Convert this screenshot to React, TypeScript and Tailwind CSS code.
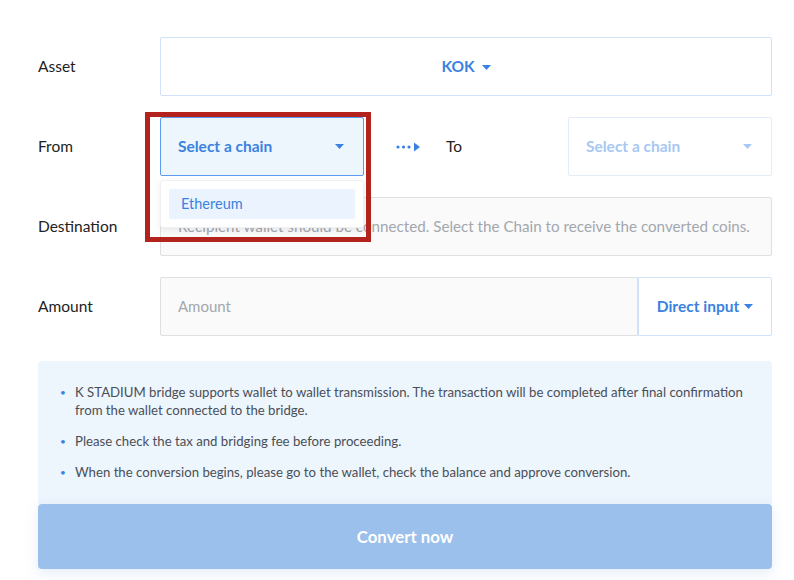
import React from "react";

const font = { fontFamily: "Lato, 'Noto Sans', sans-serif" };

function Caret({ className = "" }: { className?: string }) {
  return (
    <svg width="9" height="5" viewBox="0 0 9 5" className={className}>
      <path d="M0 0 H9 L4.5 5 Z" fill="currentColor" />
    </svg>
  );
}

function DotsArrow() {
  return (
    <svg width="25" height="10" viewBox="0 0 25 10" className="text-[#3b82e0]">
      <circle cx="2" cy="5" r="1.6" fill="currentColor" />
      <circle cx="7.5" cy="5" r="1.6" fill="currentColor" />
      <circle cx="13" cy="5" r="1.6" fill="currentColor" />
      <path d="M18 0.5 L24 5 L18 9.5 Z" fill="currentColor" />
    </svg>
  );
}

export default function App() {
  return (
    <div className="w-[794px] h-[580px] bg-white overflow-hidden relative text-[#222]" style={font}>
      <div className="ml-[38px] w-[734px] pt-[37px]">
        {/* Asset */}
        <div className="flex items-center h-[59px]">
          <div className="w-[122px] text-[15.5px]">Asset</div>
          <div className="flex-1 h-full border border-[#cfe2f9] rounded-[2px] flex items-center justify-center gap-[7px] text-[#3b82e0] font-bold text-[15.5px]">
            KOK <Caret className="mt-[2px]" />
          </div>
        </div>

        {/* From / To */}
        <div className="flex items-center h-[59px] mt-[21px]">
          <div className="w-[122px] text-[15.5px]">From</div>
          <div className="relative w-[204px] h-full">
            <div className="h-full bg-[#edf5fd] border border-[#5c9cef] rounded-[2px] flex items-center justify-between pl-[17px] pr-[19px] text-[#3b82e0] font-bold text-[15.5px]">
              Select a chain
              <Caret />
            </div>
            <div className="absolute left-0 top-[63px] w-[204px] z-20 bg-white border border-[#eef0f3] rounded-[3px] shadow-[0_2px_6px_rgba(0,0,0,0.08)] p-[8px]">
              <div className="h-[30px] bg-[#ebf4fe] rounded-[2px] flex items-center pl-[12px] text-[14.5px] text-[#3b82e0]">
                Ethereum
              </div>
            </div>
          </div>
          <div className="ml-[32px]">
            <DotsArrow />
          </div>
          <div className="ml-[25px] text-[15.5px]">To</div>
          <div className="ml-auto w-[204px] h-full border border-[#e3edfa] rounded-[2px] flex items-center justify-between pl-[17px] pr-[19px] text-[#a7c8f2] font-bold text-[15.5px]">
            Select a chain
            <Caret />
          </div>
        </div>

        {/* Destination */}
        <div className="flex items-center h-[59px] mt-[21px]">
          <div className="w-[122px] text-[15.5px]">Destination</div>
          <div className="flex-1 h-full bg-[#fafafa] border border-[#dedfe1] rounded-[2px] flex items-center pl-[17px] text-[15.2px] text-[#a3a7ae]">
            Recipient wallet should be connected. Select the Chain to receive the converted coins.
          </div>
        </div>

        {/* Amount */}
        <div className="flex items-center h-[59px] mt-[21px]">
          <div className="w-[122px] text-[15.5px]">Amount</div>
          <div className="flex-1 h-full bg-[#fafafa] border border-[#dedfe1] rounded-l-[2px] flex items-center pl-[17px] text-[15px] text-[#a3a7ae]">
            Amount
          </div>
          <div className="w-[134px] h-full border border-[#cfe2f9] rounded-r-[2px] flex items-center justify-center gap-[5px] text-[#3b82e0] font-bold text-[15.5px]">
            Direct input <Caret />
          </div>
        </div>

        {/* Notice */}
        <div className="mt-[25px] bg-[#edf5fd] rounded-t-[4px] pt-[22px] pb-[23px] pl-[22px] pr-[24px] text-[13.2px] leading-[18px] text-[#4a4f57]">
          <ul className="flex flex-col gap-[13px]">
            {[
              "K STADIUM bridge supports wallet to wallet transmission. The transaction will be completed after final confirmation from the wallet connected to the bridge.",
              "Please check the tax and bridging fee before proceeding.",
              "When the conversion begins, please go to the wallet, check the balance and approve conversion.",
            ].map((t) => (
              <li key={t} className="flex">
                <span className="w-[15px] shrink-0 text-[#3b82e0] text-[10px] leading-[18px]">•</span>
                <span>{t}</span>
              </li>
            ))}
          </ul>
        </div>

        <button className="w-full h-[65px] bg-[#9cc0ec] rounded-[4px] text-white font-bold text-[16.8px] shadow-[0_4px_14px_rgba(80,130,200,0.15)]">
          Convert now
        </button>
      </div>

      {/* highlight annotation */}
      <div className="absolute left-[145px] top-[112px] w-[226px] h-[130px] border-[5px] border-[#b3221c] z-30 pointer-events-none" />
    </div>
  );
}
